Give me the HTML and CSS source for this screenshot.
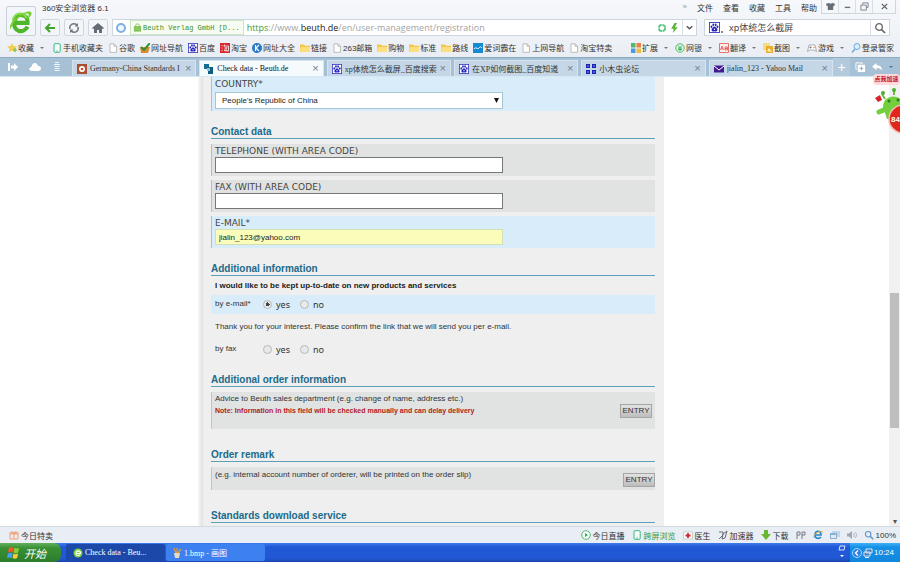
FILE: index.html
```html
<!DOCTYPE html>
<html lang="en">
<head>
    <meta charset="UTF-8">
    <meta name="viewport" content="width=device-width, initial-scale=1.0">
    <title>Check data - Beuth.de</title>
    <link rel="stylesheet" href="styles.css">
</head>
<body>
    <!-- Shared icons -->
    <svg class="sprite" aria-hidden="true">
        <symbol id="folder" viewBox="0 0 10 10"><path d="M0 1.5h4l1 1.2h5V9H0z" fill="#f3c64b"/><path d="M1 4h9v5H0z" fill="#fbdf80"/></symbol>
        <symbol id="page" viewBox="0 0 10 10"><path d="M2 .8h4l2.500 2.500v6h-6.500z" fill="#fff" stroke="#a9adb3" stroke-width=".8"/><path d="M6 .8v2.500h2.500" fill="none" stroke="#a9adb3" stroke-width=".8"/></symbol>
        <symbol id="phone" viewBox="0 0 10 10"><rect x="2" y=".7" width="6.200" height="8.600" rx="1" fill="#f5fffa" stroke="#3db583"/><path d="M4 8h2" stroke="#3db583" stroke-width=".7"/></symbol>
        <symbol id="paw" viewBox="0 0 12 12"><rect x=".5" y=".5" width="11" height="11" fill="#fff" stroke="#3a3fc0"/><g fill="#2424c0"><ellipse cx="2.700" cy="5.300" rx="1" ry="1.400"/><ellipse cx="4.700" cy="3" rx="1" ry="1.500"/><ellipse cx="7.300" cy="3" rx="1" ry="1.500"/><ellipse cx="9.300" cy="5.300" rx="1" ry="1.400"/><path d="M6 5c1.200 0 1.600 1.300 2.600 2.200s.8 3-.8 3.100c-.8 0-1-.3-1.800-.3s-1 .3-1.800.3c-1.600-.1-1.800-2.200-.8-3.100S4.800 5 6 5z"/></g><circle cx="6" cy="8" r=".8" fill="#fff"/></symbol>
        <symbol id="search" viewBox="0 0 12 12"><circle cx="5" cy="5" r="3.300" fill="none" stroke="currentColor" stroke-width="1.300"/><path d="M7.500 7.500l3.500 3.500" stroke="currentColor" stroke-width="1.700"/></symbol>
        <symbol id="earth" viewBox="0 0 20 20"><circle cx="10" cy="10" r="9" fill="#79d33a"/><path d="M5 11h10c0-7-9-7-9 0 0 5 6 5 8 2" fill="none" stroke="#fff" stroke-width="2.400"/></symbol>
    </svg>

    <header class="browser">
        <div class="top">
            <div class="logo">
                <svg viewBox="0 0 30 30" width="30" height="30"><path d="M7 17h15c1-10-12-12-14-1-2 11 10 13 14 5" fill="none" stroke="#4fb52a" stroke-width="4.500"/><path d="M6 14C9 5 18 5 21 12" fill="none" stroke="#8be04d" stroke-width="2"/><path d="M4 24C-1 18 18 3 25 5c4 2-2 7-4 9 3-5 3-7 0-7C16 7 5 17 4 24z" fill="#78ce32"/></svg>
            </div>
            <div class="top-rows">
                <div class="title-row">
                    <span class="app-name">360安全浏览器 6.1</span>
                    <nav class="menu">
                        <span class="more">»</span>
                        <a href="#">文件</a><a href="#">查看</a><a href="#">收藏</a><a href="#">工具</a><a href="#">帮助</a>
                    </nav>
                    <div class="window-buttons">
                        <button aria-label="Skin"><svg viewBox="0 0 10 10" width="9" height="9"><path d="M0 2l3-1 2 1 2-1 3 1-1 3-1-1v5H2V4L1 5z" fill="#666e78"/></svg></button>
                        <button aria-label="Minimize"><svg viewBox="0 0 10 10" width="9" height="9"><path d="M2 6h6" stroke="#666e78" stroke-width="1.500"/></svg></button>
                        <button aria-label="Restore"><svg viewBox="0 0 10 10" width="9" height="9"><path d="M3 3V1h6v5H7M1 3.500h6V9H1z" fill="none" stroke="#777f89"/></svg></button>
                        <button class="close" aria-label="Close"><svg viewBox="0 0 10 10" width="9" height="9"><path d="M2 2l6 6M8 2L2 8" stroke="#555d67" stroke-width="1.300"/></svg></button>
                    </div>
                </div>
                <div class="address-row">
                    <button class="nav-button" aria-label="Back"><svg viewBox="0 0 12 12" width="12" height="12"><path d="M11 6H3M6 2L2 6l4 4" fill="none" stroke="#43a32c" stroke-width="2"/></svg></button>
                    <button class="nav-button" aria-label="Reload"><svg viewBox="0 0 12 12" width="12" height="12"><path d="M2 7C1 3 5 0 9 3M10 5c1 4-3 7-7 4" fill="none" stroke="#737983" stroke-width="1.600"/><path d="M10 1v3.500H6.500zM2 11V7.500h3.500z" fill="#737983"/></svg></button>
                    <button class="nav-button" aria-label="Home"><svg viewBox="0 0 12 12" width="12" height="12"><path d="M0 6l6-5 6 5-1 1-1-.5V11H7V8H5v3H2V6.500L1 7z" fill="#676d77"/></svg></button>
                    <div class="address">
                        <svg viewBox="0 0 12 12" width="12" height="12"><circle cx="6" cy="6" r="4" fill="#edf7ff" stroke="#7eafe2" stroke-width="2"/></svg>
                        <span class="cert"><svg viewBox="0 0 10 10" width="9" height="9"><path d="M3 4V2.500c0-2 4-2 4 0V4" fill="none" stroke="#7fbf5c"/><rect x="1" y="3.500" width="8" height="6" fill="#78bd4f"/><path d="M1 5.500h8M1 7.500h8" stroke="#a9db86" stroke-width=".7"/></svg>Beuth Verlag GmbH [D...</span>
                        <span class="url"><em>https</em>://www.<b>beuth.de</b>/en/user-management/registration</span>
                        <svg viewBox="0 0 12 12" width="10" height="10"><circle cx="6" cy="6" r="3.800" fill="none" stroke="#4fc378" stroke-width="2" stroke-dasharray="5 1"/></svg>
                        <svg viewBox="0 0 10 12" width="9" height="10"><path d="M5 0L1 7h3l-1 5 6-7H5.500L8 0z" fill="#59b431"/></svg>
                        <button class="drop" aria-label="History"><svg viewBox="0 0 10 10" width="9" height="9"><path d="M2 3.500l3 3 3-3" fill="none" stroke="#555" stroke-width="1.600"/></svg></button>
                    </div>
                    <div class="search">
                        <svg width="11" height="11"><use href="#paw"/></svg><i></i>
                        <input class="search-text" type="text" aria-label="Search" value="xp体统怎么截屏">
                        <button class="search-go" aria-label="Go"><svg width="12" height="12"><use href="#search"/></svg></button>
                    </div>
                </div>
            </div>
        </div>

        <nav class="bookmarks">
            <a class="arrow" href="#"><svg viewBox="0 0 10 10"><path d="M5 0l1.500 3 3.500.5-2.500 2.300.6 3.400L5 7.600 1.900 9.200l.6-3.400L0 3.500 3.500 3z" fill="#f3cf51"/><path d="M6 7h4M8 5v4" stroke="#77bb44" stroke-width="1.200"/></svg>收藏</a>
            <a href="#"><svg><use href="#phone"/></svg>手机收藏夹</a>
            <a href="#"><svg><use href="#page"/></svg>谷歌</a>
            <a href="#"><svg viewBox="0 0 10 10"><path d="M0 4h10L8 10H1z" fill="#e38a2c"/><path d="M1 4l3 3 6-7" fill="none" stroke="#318f36" stroke-width="2"/></svg>网址导航</a>
            <a href="#"><svg><use href="#paw"/></svg>百度</a>
            <a href="#"><svg viewBox="0 0 10 10"><path d="M0 0h10v10H0z" fill="#d8272d"/><path d="M1.500 2l1 1M1.500 5l1 0M1.500 8l1.300-1M4.500 1.500L4 3.500M4 3h4.500v5H7M4.500 5h3M6 4v4M4.500 6.500v1.300h3" stroke="#fff" fill="none" stroke-width=".8"/></svg>淘宝</a>
            <a href="#"><svg viewBox="0 0 10 10"><circle cx="5" cy="5" r="5" fill="#2477c8"/><path d="M3.500 2v6M7 2L4 5l3 3" stroke="#fff" fill="none" stroke-width="1.200"/></svg>网址大全</a>
            <a href="#"><svg><use href="#folder"/></svg>链接</a>
            <a href="#"><svg><use href="#page"/></svg>263邮箱</a>
            <a href="#"><svg><use href="#folder"/></svg>购物</a>
            <a href="#"><svg><use href="#folder"/></svg>标准</a>
            <a href="#"><svg><use href="#folder"/></svg>路线</a>
            <a href="#"><svg viewBox="0 0 10 10"><path d="M0 0h10v10H0z" fill="#148bd0"/><path d="M1 6c2-3 3 1 5-1s2-1 3 0" stroke="#fff" fill="none"/></svg>爱词霸在</a>
            <a href="#"><svg><use href="#page"/></svg>上网导航</a>
            <a href="#"><svg><use href="#page"/></svg>淘宝特卖</a>
            <span class="extensions">
                <a class="arrow" href="#"><svg viewBox="0 0 10 10"><path d="M0 0h4.500v4.500H0z" fill="#55b56f"/><path d="M5.500 0H10v4.500H5.500z" fill="#f08040"/><path d="M0 5.500h4.500V10H0z" fill="#4b9bdc"/><path d="M5.500 5.500H10V10H5.500z" fill="#efbb42"/></svg>扩展</a>
                <a class="arrow" href="#"><svg viewBox="0 0 10 10"><circle cx="5" cy="5" r="4.200" fill="#e5fae8" stroke="#4fbb6d"/><path d="M3 2.500l2 2 2-2M3 5h4M3 6.500h4M5 5v3" fill="none" stroke="#31a856" stroke-width=".9"/></svg>网银</a>
                <a class="arrow" href="#"><svg viewBox="0 0 10 10"><path d="M.5.500h9v9h-9z" fill="#fff0ee" stroke="#e5746e"/><path d="M1.500 7l1.500-4 1.500 4M2 5.800h2M6 7V4h2.500v3H6M6 5.500h2.500" fill="none" stroke="#df514a" stroke-width=".8"/></svg>翻译</a>
                <a class="arrow" href="#"><svg viewBox="0 0 10 10"><path d="M0 0h7v7H0z" fill="#f4dc86"/><path d="M3 3h7v7H3z" fill="#e8ae2e"/><path d="M4 8l2-3 3 4" fill="#fff2b8"/></svg>截图</a>
                <a class="arrow" href="#"><svg viewBox="0 0 10 10"><path d="M2 2h6l1.500 6.500L7 7H3L.5 8.500z" fill="#fff" stroke="#999fa6" stroke-width=".8"/><path d="M2.500 4.500h2M3.500 3.500v2" stroke="#777"/><circle cx="7" cy="4.500" r=".8" fill="#d99a55"/></svg>游戏</a>
                <a href="#"><svg viewBox="0 0 10 10"><circle cx="6" cy="3.500" r="3" fill="#d8efff" stroke="#6da9dd"/><path d="M4 6L1 9.500" stroke="#6da9dd" stroke-width="1.500"/></svg>登录管家</a>
            </span>
        </nav>

        <div class="tab-strip">
            <div class="tab-tools">
                <svg viewBox="0 0 10 10" width="10" height="10"><path d="M0 1v8h2V1zM3 3.500h3V1l4 4-4 4V6.500H3z" fill="#fff"/></svg>
                <svg viewBox="0 0 12 10" width="12" height="10"><path d="M3 9C-1 9 0 5 2.500 5 3 0 8 0 9 4c4 0 4 5 0 5z" fill="#fff"/></svg>
                <svg viewBox="0 0 10 10" width="10" height="10"><path d="M3 .5h4M2 2.500h6M2.500 4.500h5M2.500 6.500h5M2.500 8.500h5" fill="none" stroke="#f0f5f9"/></svg>
            </div>
            <div class="tabs">
                <div class="tab"><svg viewBox="0 0 10 10"><path d="M0 0h10v10H0z" fill="#a8502f"/><circle cx="5" cy="5" r="3" fill="#fff"/><circle cx="5" cy="5" r="1.300" fill="#d84c1f"/></svg><span>Germany-China Standards I</span><button aria-label="Close tab">×</button></div>
                <div class="tab active"><svg viewBox="0 0 10 10"><path d="M0 0h5v5H0z" fill="#166f91"/><path d="M4 3h5v7H4z" fill="#0d5d7f"/><path d="M3 4h3v3H3z" fill="#8cc3d4"/></svg><span>Check data - Beuth.de</span><button aria-label="Close tab">×</button></div>
                <div class="tab"><svg><use href="#paw"/></svg><span>xp体统怎么截屏_百度搜索</span><button aria-label="Close tab">×</button></div>
                <div class="tab"><svg><use href="#paw"/></svg><span>在XP如何截图_百度知道</span><button aria-label="Close tab">×</button></div>
                <div class="tab"><svg viewBox="0 0 10 10"><path d="M0 0h4v4H0zM6 0h4v4H6zM0 6h4v4H0zM6 6h4v4H6z" fill="#1822bb"/><path d="M1.500 1.500h1v1h-1zM7.500 1.500h1v1h-1zM1.500 7.500h1v1h-1zM7.500 7.500h1v1h-1z" fill="#fff"/></svg><span>小木虫论坛</span><button aria-label="Close tab">×</button></div>
                <div class="tab"><svg viewBox="0 0 10 10"><path d="M0 1.500h10v7H0z" fill="#411a91"/><path d="M0 2l5 4 5-4" fill="none" stroke="#fff"/></svg><span>jialin_123 - Yahoo Mail</span><button aria-label="Close tab">×</button></div>
            </div>
            <button class="new-tab" aria-label="New tab">+</button>
            <div class="tab-end">
                <svg viewBox="0 0 12 12" width="11" height="11"><path d="M1 1h7v1M1 1v7h1" fill="none" stroke="#fff"/><path d="M3 3h8v8H3z" fill="#fff"/><path d="M7 5v4M5 7h4" stroke="#84a6c0"/></svg>
                <svg viewBox="0 0 12 12" width="11" height="11"><path d="M0 5l5-4v2.500c4 0 6 2 6 6-1-2-3-3-6-3V9z" fill="#fff"/></svg>
                <svg viewBox="0 0 4 4" width="4" height="4"><path d="M0 1h4L2 3z" fill="#55718a"/></svg>
            </div>
        </div>
    </header>

    <main class="viewport">
        <form class="sheet">
            <div class="field required first">
                <label for="country">COUNTRY*</label>
                <select id="country"><option>People's Republic of China</option></select>
            </div>

            <h2>Contact data</h2>
            <div class="field">
                <label for="phone-field">TELEPHONE (WITH AREA CODE)</label>
                <input id="phone-field" type="text">
            </div>
            <div class="field">
                <label for="fax-field">FAX (WITH AREA CODE)</label>
                <input id="fax-field" type="text">
            </div>
            <div class="field required">
                <label for="email">E-MAIL*</label>
                <input id="email" class="autofill" type="text" value="jialin_123@yahoo.com">
            </div>

            <h2>Additional information</h2>
            <p class="lead">I would like to be kept up-to-date on new products and services</p>
            <div class="choice highlighted">
                <span class="choice-name">by e-mail*</span>
                <label><input type="radio" name="by-mail" checked>yes</label>
                <label><input type="radio" name="by-mail">no</label>
            </div>
            <p class="hint">Thank you for your interest. Please confirm the link that we will send you per e-mail.</p>
            <div class="choice">
                <span class="choice-name">by fax</span>
                <label><input type="radio" name="by-fax">yes</label>
                <label><input type="radio" name="by-fax">no</label>
            </div>

            <h2>Additional order information</h2>
            <div class="entry tall">
                <div>
                    <p>Advice to Beuth sales department (e.g. change of name, address etc.)</p>
                    <p class="note">Note: Information in this field will be checked manually and can delay delivery</p>
                </div>
                <button type="button">ENTRY</button>
            </div>

            <h2>Order remark</h2>
            <div class="entry">
                <p>(e.g. internal account number of orderer, will be printed on the order slip)</p>
                <button type="button">ENTRY</button>
            </div>

            <h2>Standards download service</h2>
        </form>
        <div class="scrollbar"><div class="thumb"></div><span>▾</span></div>
    </main>

    <!-- Floating speed-up widget -->
    <div class="booster">
        <span class="booster-label">点我加速</span>
        <svg viewBox="0 0 30 50" width="30" height="50">
            <path d="M9 9l3 5M21 4v6" stroke="#6fbf45" stroke-width="2"/><circle cx="10" cy="8" r="2" fill="#4fae35"/><circle cx="21" cy="5" r="2" fill="#4fae35"/>
            <path d="M10 22c0-14 20-14 22 0v12H14z" fill="#72d03c"/><circle cx="16" cy="16" r="1.500" fill="#2e7b1c"/><circle cx="25" cy="15" r="1.500" fill="#2e7b1c"/>
            <path d="M13 24l-7 3" stroke="#72d03c" stroke-width="5" stroke-linecap="round"/><path d="M2 13l5-3 2 5-4 2z" fill="#d9222c"/>
            <circle cx="30" cy="34" r="14" fill="#e2261c" stroke="#f4b8b0" stroke-width="1.500"/>
            <text class="booster-value" x="18" y="37">84</text>
        </svg>
    </div>

    <footer class="status">
        <a href="#"><svg viewBox="0 0 10 10"><path d="M1 4h8v5H1zM0 3h10M5 3v6M5 3C2 0 1 3 5 3s3-3 0 0" fill="none" stroke="#efa173"/></svg>今日特卖</a>
        <div class="status-right">
            <a href="#"><svg viewBox="0 0 10 10"><circle cx="5" cy="5" r="4.300" fill="#f2fff6" stroke="#54b974"/><path d="M4 3l3 2-3 2z" fill="#38a85c"/></svg>今日直播</a>
            <a class="green" href="#"><svg><use href="#phone"/></svg>跨屏浏览</a>
            <a href="#"><svg viewBox="0 0 10 10"><path d="M.5 2h9v7h-9z" fill="#fff" stroke="#b9bcc3" stroke-width=".7"/><path d="M5 3v5M2.500 5.500h5" stroke="#d22730" stroke-width="1.800"/></svg>医生</a>
            <a href="#"><svg viewBox="0 0 10 10"><path d="M1 2h4v3L1 9M5 4l4-3-2 7-3 1z" fill="none" stroke="#686d75"/></svg>加速器</a>
            <a href="#"><svg viewBox="0 0 10 10"><path d="M3 0h4v4h3L5 10 0 4h3z" fill="#68b82e"/></svg>下载</a>
            <svg viewBox="0 0 10 10"><path d="M1 9V2h3v3H1M6 9V2h3v3H6" fill="none" stroke="#777d86"/></svg>
            <svg viewBox="0 0 10 10"><path d="M2 5h6c0-5-6-5-6 0 0 4 4 4 6 2" fill="none" stroke="#2787ce" stroke-width="1.700"/><path d="M0 8C0 4 8 0 10 2" fill="none" stroke="#edb83a"/></svg>
            <svg viewBox="0 0 10 10"><path d="M2 1h8v6H2z" fill="#bdd7ed"/><path d="M0 3h7v6H0z" fill="#8dafd0"/><path d="M1 5h5v3H1z" fill="#dbeaf7"/></svg>
            <svg viewBox="0 0 10 10"><path d="M0 3.500h2L5 1v8L2 6.500H0z" fill="#9da6b2"/><path d="M6.500 3c1 1 1 3 0 4M8 2c2 2 2 4 0 6" fill="none" stroke="#9da6b2" stroke-width=".8"/></svg>
            <a class="zoom" href="#"><svg><use href="#search"/></svg>100%</a>
        </div>
    </footer>

    <div class="taskbar">
        <button class="start"><svg viewBox="0 0 14 14" width="13" height="13"><path d="M2 2c2-1 3-1 5 0L6 7C4 6 3 6 1 7z" fill="#ee5a28"/><path d="M8 2c2 1 3 1 5 0l-1 5c-2 1-3 1-5 0z" fill="#8ccd38"/><path d="M1 8c2-1 3-1 5 0l-1 5c-2-1-3-1-5 0z" fill="#4c9cf5"/><path d="M7 8c2 1 3 1 5 0l-1 5c-2 1-3 1-5 0z" fill="#f8cb3d"/></svg>开始</button>
        <button class="task current"><svg width="10" height="10"><use href="#earth"/></svg>Check data - Beu...</button>
        <button class="task"><svg viewBox="0 0 10 10" width="10" height="10"><path d="M2 5h6L7 10H3z" fill="#e5dcc3"/><path d="M4 5L2 0M5 5V0M6 5l3-4" stroke="#e29a3c" stroke-width="1.300"/></svg>1.bmp - 画图</button>
        <svg class="printer" viewBox="0 0 8 14" width="8" height="14"><path d="M2 1h5L6 5H1z" fill="none" stroke="#dbe6ff"/><path d="M2 10h4L4 12z" fill="#fff"/></svg>
        <div class="tray">
            <svg viewBox="0 0 10 10" width="10" height="10"><circle cx="5" cy="5" r="4.500" fill="#2c7de4" stroke="#a6d4ff"/><path d="M6 2.500L3.500 5 6 7.500" fill="none" stroke="#fff" stroke-width="1.400"/></svg>
            <svg viewBox="0 0 10 10" width="10" height="10"><path d="M3 1h6v4H3zM1 4h6v4H1z" fill="#3878b4" stroke="#dceafa"/><path d="M2 9.500h4" stroke="#dceafa"/></svg>
            <time>10:24</time>
        </div>
    </div>
</body>
</html>
```

FILE: styles.css
```css
* {
    box-sizing: border-box;
}
body {
    margin: 0;
    height: 100vh;
    display: flex;
    flex-direction: column;
    position: relative;
    overflow: hidden;
    font-family: "Liberation Sans", "Noto Sans CJK SC", sans-serif;
    font-size: 8px;
    color: #333;
    background: #fff;
}
a {
    color: inherit;
    text-decoration: none;
}
button {
    font: inherit;
    color: inherit;
    padding: 0;
    border: 0;
    background: none;
}
svg {
    flex: none;
    display: block;
}
.sprite {
    position: absolute;
    width: 0;
    height: 0;
}

/* Browser header */
.browser {
    flex: none;
    background: linear-gradient(#f6f8fb, #e6ebf2);
}
.top {
    display: flex;
    gap: 4px;
    padding-left: 6px;
    height: 38px;
}
.logo {
    flex: none;
    width: 30px;
    height: 30px;
    margin-top: 6px;
    border: 1px solid #c9d0d9;
    border-radius: 2px;
    background: #f2f5f9;
}
.logo svg {
    width: 28px;
    height: 28px;
}
.top-rows {
    flex: 1;
    min-width: 0;
}
.title-row {
    display: flex;
    height: 19px;
    padding: 0 4px 4px 2px;
    align-items: center;
}
.app-name {
    flex: 1;
}
.menu {
    display: flex;
    gap: 10px;
    margin-right: 4px;
}
.more {
    color: #999;
}
.window-buttons {
    display: flex;
    height: 14px;
    align-self: flex-start;
    border: 1px solid #d0d6de;
    border-top: 0;
}
.window-buttons button {
    width: 17px;
    display: flex;
    align-items: center;
    justify-content: center;
    border-right: 1px solid #d9dee5;
}
.window-buttons .close {
    width: 22px;
    border-right: 0;
}
.address-row {
    display: flex;
    gap: 4px;
    height: 17px;
    padding-right: 10px;
}
.nav-button {
    width: 20px;
    display: flex;
    align-items: center;
    justify-content: center;
    border: 1px solid #d0d6de;
    border-radius: 2px;
    background: #f4f6f9;
}
.address,
.search {
    display: flex;
    align-items: center;
    background: #fff;
    border: 1px solid #cdd5df;
}
.address {
    flex: 1;
    min-width: 0;
    gap: 3px;
    padding-left: 2px;
}
.cert {
    flex: none;
    display: flex;
    align-items: center;
    gap: 1px;
    height: 15px;
    padding: 0 3px 0 2px;
    border: 1px solid #cfe6c2;
    background: #f6fcf1;
    color: #3c8f26;
    font-family: "Liberation Mono", monospace;
    font-size: 7px;
}
.url {
    flex: 1;
    font-family: "Open Sans", sans-serif;
    font-size: 9px;
    color: #a3a3a3;
    white-space: nowrap;
}
.url em {
    font-style: normal;
    color: #3d9b3d;
}
.url b {
    font-weight: normal;
    color: #222;
}
.drop {
    width: 14px;
    height: 15px;
    display: flex;
    align-items: center;
    justify-content: center;
    border-left: 1px solid #d8dee6;
}
.search {
    width: 186px;
    margin-left: 3px;
    padding-left: 4px;
}
.search i {
    width: 2px;
    height: 2px;
    margin: 8px 6px 0 1px;
    background: #888;
}
.search-text {
    flex: 1;
    min-width: 0;
    padding: 0;
    border: 0;
    background: none;
    font-family: "Noto Sans", "Noto Sans CJK SC", sans-serif;
    font-size: 9px;
    color: #444;
}
.search-go {
    width: 19px;
    height: 15px;
    display: flex;
    align-items: center;
    justify-content: center;
    border-left: 1px solid #d8dee6;
    color: #666;
}

/* Bookmarks */
.bookmarks {
    display: flex;
    align-items: center;
    gap: 5px;
    height: 19px;
    padding: 0 6px 0 7px;
    white-space: nowrap;
}
.bookmarks a,
.status a {
    display: flex;
    align-items: center;
    gap: 1px;
}
.status a {
    gap: 2px;
}
.bookmarks svg,
.status svg {
    width: 10px;
    height: 10px;
}
.extensions {
    display: flex;
    gap: 4px;
    margin-left: auto;
}
.arrow::after {
    content: "";
    margin: 0 3px 0 5px;
    border: 2px solid transparent;
    border-top-color: #777;
    border-bottom: 0;
}

/* Tabs */
.tab-strip {
    display: flex;
    height: 20px;
    border-top: 1px solid #8cacc2;
    border-bottom: 1px solid #d5e8f3;
    background: #a6c0d5;
}
.tab-tools {
    display: flex;
    align-items: center;
    gap: 11px;
    width: 72px;
    padding-left: 8px;
}
.tabs {
    display: flex;
    flex: 1;
    min-width: 0;
    gap: 3px;
    padding-top: 2px;
}
.tab {
    flex: 1;
    min-width: 0;
    display: flex;
    align-items: center;
    gap: 3px;
    padding: 0 4px;
    background: #c5d7e6;
    border: 1px solid #d7e4ee;
    border-bottom: 0;
    font-family: "Liberation Serif", "Noto Sans CJK SC", serif;
    white-space: nowrap;
}
.tab svg {
    width: 10px;
    height: 10px;
}
.tab span {
    flex: 1;
    overflow: hidden;
}
.tab button {
    font-family: "Liberation Sans", sans-serif;
    font-size: 11px;
    line-height: 11px;
    color: #73828f;
}
.tab.active {
    background: #f5fafd;
    color: #111;
}
.new-tab {
    width: 17px;
    color: #fff;
    font-size: 14px;
    line-height: 14px;
    background: #b3cadc;
}
.tab-end {
    display: flex;
    align-items: center;
    gap: 6px;
    width: 50px;
    padding-left: 5px;
}

/* Page */
.viewport {
    flex: 1;
    min-height: 0;
    display: flex;
    overflow: hidden;
    padding-left: 22%;
}
.sheet {
    flex: 0 1 466px;
    min-width: 0;
    align-self: stretch;
    padding: 0 9px 0 13px;
    background: linear-gradient(90deg, #f8f8f8, #e3e4e4 4px, #eeefee 6px);
}
.sheet h2 {
    margin: 0 0 5px;
    border-bottom: 1px solid #5e9fba;
    font-size: 10px;
    line-height: 12px;
    color: #1d6a8a;
}
.sheet p {
    margin: 0;
}
.field {
    height: 32px;
    margin-bottom: 4px;
    padding: 2px 4px 2px 3px;
    background: #e1e3e2;
    border-left: 1px solid #b9bcbc;
}
.field.required {
    background: #d8edf9;
    border-left-color: #9fc4d8;
    margin-bottom: 15px;
}
.field.first {
    height: 34px;
}
.field label {
    display: block;
    font-family: "DejaVu Sans", sans-serif;
    font-size: 9px;
    line-height: 11px;
    color: #444;
}
.field input,
.field select {
    display: block;
    width: 66%;
    height: 16px;
    padding: 0 3px;
    border: 1px solid #777;
    background: #fff;
    font-family: inherit;
    font-size: 8px;
    color: #222;
}
.field select {
    appearance: none;
    height: 17px;
    margin-top: 2px;
    padding-left: 6px;
    border-color: #a8c5d4;
    border-radius: 0;
    background: #fff url("data:image/svg+xml,%3Csvg xmlns='http://www.w3.org/2000/svg' width='5' height='5'%3E%3Cpath d='M0 0h5L2.500 5z' fill='%23111'/%3E%3C/svg%3E") no-repeat right 3px center;
}
.field input.autofill {
    background: #fafdb9;
    border-color: #d3dfb5;
}
.lead {
    padding: 0 4px;
    font-weight: bold;
    line-height: 10px;
    color: #222;
}
.choice {
    display: flex;
    height: 19px;
    padding-left: 4px;
    align-items: center;
}
.choice.highlighted {
    margin-top: 4px;
    background: #d8edf9;
}
.choice-name {
    width: 48px;
    padding-bottom: 3px;
}
.choice label {
    display: flex;
    align-items: center;
    gap: 4px;
    width: 37px;
    font-family: "Noto Sans", sans-serif;
    font-size: 9px;
}
.choice input {
    appearance: none;
    width: 9px;
    height: 9px;
    margin: 0;
    border: 1px solid #b5b8b9;
    border-radius: 50%;
    background: #e8e9e9;
}
.choice input:checked {
    background: radial-gradient(#444 2px, #e8e9e9 2px);
}
.sheet .hint {
    padding: 8px 4px 0;
    margin-bottom: 8px;
    line-height: 10px;
}
.choice + h2 {
    margin-top: 15px;
}
.entry {
    display: flex;
    justify-content: space-between;
    height: 23px;
    margin-bottom: 20px;
    padding: 2px 0 0 3px;
    background: #e1e3e2;
    border-left: 1px solid #c3c5c5;
    line-height: 12px;
}
.entry.tall {
    height: 37px;
    padding: 1px 3px 0 3px;
}
.entry .note {
    font-size: 7px;
    font-weight: bold;
    color: #b01c24;
}
.entry button {
    align-self: center;
    width: 32px;
    height: 14px;
    border: 1px solid #a4a6a6;
    background: linear-gradient(#e2e2e2, #bdbdbd);
    color: #333;
}
.scrollbar {
    display: flex;
    flex-direction: column;
    justify-content: space-between;
    align-items: center;
    width: 11px;
    margin-left: auto;
    background: #f1f1f2;
}
.scrollbar::before {
    content: "";
    flex: 216;
}
.thumb {
    flex: 136;
    width: 9px;
    background: #bdbebf;
}
.scrollbar span {
    flex: 98;
    display: flex;
    align-items: flex-end;
    color: #555;
}

/* Widget over the page corner */
.booster {
    position: absolute;
    top: 74px;
    right: 0;
    width: 27px;
    overflow: hidden;
}
.booster-label {
    display: block;
    width: 27px;
    border-radius: 4px;
    background: #ffd9dc;
    color: #c0181f;
    font-size: 6px;
    line-height: 11px;
    font-weight: bold;
    text-align: center;
}
.booster-value {
    font-size: 8px;
    font-weight: bold;
    fill: #fff;
}

/* Status bar */
.status {
    flex: none;
    display: flex;
    justify-content: space-between;
    align-items: center;
    height: 17px;
    padding: 0 4px 0 9px;
    background: #e9edf4;
    border-top: 1px solid #d3d9e2;
    white-space: nowrap;
}
.status-right {
    display: flex;
    align-items: center;
    gap: 7px;
}
.green {
    color: #2fa04d;
}
.zoom svg {
    color: #5a92c5;
}

/* Taskbar */
.taskbar {
    flex: none;
    display: flex;
    align-items: stretch;
    height: 19px;
    background: linear-gradient(#3f7cec, #2158d6 4px, #2158d6 15px, #1b46ae);
    color: #fff;
}
.start {
    display: flex;
    align-items: center;
    gap: 4px;
    width: 61px;
    margin-right: 5px;
    padding-left: 7px;
    border-radius: 0 7px 7px 0;
    background: linear-gradient(#63ae5b, #389035 5px, #2c7d2b);
    font-size: 11px;
    font-style: italic;
}
.task {
    display: flex;
    align-items: center;
    gap: 2px;
    width: 99px;
    margin: 1px 1px 1px 0;
    padding-left: 6px;
    border-radius: 2px;
    background: #3c81ef;
    font-family: "Liberation Serif", "Noto Sans CJK SC", serif;
}
.task.current {
    padding-left: 7px;
    background: #1c49a9;
}
.printer {
    margin: 2px 4px 0 auto;
}
.tray {
    display: flex;
    align-items: center;
    gap: 1px;
    width: 50px;
    padding-left: 2px;
    background: linear-gradient(#41b0f5, #1590e8 4px, #1187dc);
}
```
